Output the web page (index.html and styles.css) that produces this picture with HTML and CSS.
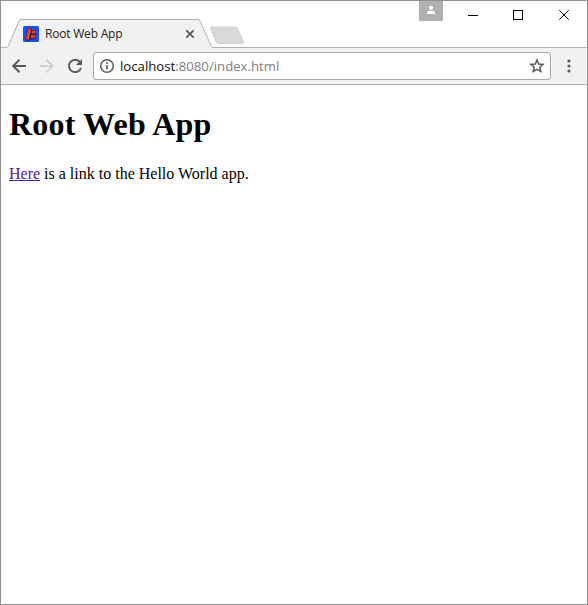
FILE: index.html
```html
<!DOCTYPE html>
<html lang="en">
<head>
<meta charset="utf-8">
<title>Root Web App</title>
<link rel="stylesheet" href="styles.css">
</head>
<body>
<div class="window">
  <header class="titlebar">
    <div class="tab">
      <svg class="tab-shape" width="210" height="29" viewBox="0 0 210 29">
        <path class="tab-fill" d="M1 29 L3 27 L14 2 Q14.800 .5 16 .5 H192.500 Q194.300 .5 195 2 L206.500 27.500 L208 29Z"/>
        <path class="tab-line" d="M0 28.500 H1 Q2.500 28.500 3 27.500 L14 2 Q14.800 .5 16 .5 H192.500 Q194.300 .5 195 2 L206.500 27.500 Q207 28.500 208.500 28.500 H210"/>
      </svg>
      <svg class="favicon" width="16" height="16" viewBox="0 0 16 16">
        <rect width="16" height="16" rx="1.500" fill="#1c50f0"/>
        <path d="M2 14 L4.500 2 H9 L8.500 4 H13.500 L12 13.500 H7 L6 15Z" fill="#1a2450"/>
        <path d="M5 2.500 H8.300 L6 13.500 H2.800Z M9.200 4.800 H13 L12.500 7.500 H8.700Z M8.200 9 H12.200 L11.700 12 H7.700Z" fill="#f23c20"/>
      </svg>
      <span class="tab-title">Root Web App</span>
      <svg class="tab-close" width="10" height="10" viewBox="0 0 10 10"><path d="M1.300 1.300 L8.700 8.700 M8.700 1.300 L1.300 8.700"/></svg>
    </div>
    <svg class="new-tab" width="36" height="19" viewBox="0 0 36 19">
      <path d="M2.500 1 H26.500 Q28 1 28.500 2.200 L34.500 16 Q35 17.500 33.500 17.500 H9.500 Q8 17.500 7.300 16.200 L1.500 2.500 Q1 1 2.500 1Z"/>
    </svg>
    <div class="controls">
      <div class="profile">
        <svg width="24" height="20" viewBox="0 0 24 20" fill="#fff"><circle cx="12" cy="6.800" r="2.100"/><path d="M8 13 V11.500 Q8 9.700 12 9.700 T16 11.500 V13Z"/></svg>
      </div>
      <svg class="caption" width="138" height="28" viewBox="0 0 138 28" shape-rendering="crispEdges">
        <path d="M19 14.500 H29"/>
        <rect x="64.500" y="9.500" width="9" height="9"/>
        <path shape-rendering="auto" d="M110.300 9.300 L119.700 18.700 M119.700 9.300 L110.300 18.700"/>
      </svg>
    </div>
  </header>
  <nav class="toolbar">
    <svg class="nav-icons" width="92" height="36" viewBox="0 0 92 36">
      <path class="icon" d="M25 18 H12.500 M18.500 11.700 L12.200 18 L18.500 24.300"/>
      <path class="icon disabled" d="M39 18 H52 M45.500 11.700 L51.800 18 L45.500 24.300"/>
      <path class="icon" d="M79 14 A6.200 6.200 0 1 0 80 20"/>
      <path d="M81 11 V17 H75Z" fill="#5a5a5a"/>
    </svg>
    <div class="omnibox">
      <svg width="16" height="16" viewBox="0 0 16 16"><circle class="info-ring" cx="8" cy="8" r="6.300"/><path d="M7.200 7 H8.800 V11.600 H7.200Z M7.200 4.300 H8.800 V5.900 H7.200Z" fill="#5a5a5a"/></svg>
      <span class="url">localhost<span class="url-rest">:8080/index.html</span></span>
      <svg class="star" width="16" height="16" viewBox="0 0 16 16"><path d="M8 2 L9.700 6 L14.100 6.400 L10.800 9.300 L11.800 13.500 L8 11.300 L4.200 13.500 L5.200 9.300 L1.900 6.400 L6.300 6Z"/></svg>
    </div>
    <svg class="menu" width="4" height="14" viewBox="0 0 4 14" fill="#5a5a5a"><circle cx="2" cy="2" r="1.600"/><circle cx="2" cy="7" r="1.600"/><circle cx="2" cy="12" r="1.600"/></svg>
  </nav>
  <main class="page">
    <h1>Root Web App</h1>
    <p><a href="#">Here</a> is a link to the Hello World app.</p>
  </main>
</div>
</body>
</html>
```
FILE: styles.css
```css
* { box-sizing: border-box; }
body { margin: 0; background: #fff; }
svg { display: block; flex: none; }
.window {
  display: flex;
  flex-direction: column;
  width: 588px;
  height: 605px;
  border: 1px solid #919191;
}
.titlebar {
  display: flex;
  align-items: flex-end;
  height: 47px;
  background: linear-gradient(#b1b1b1, #b1b1b1) bottom / 100% 1px no-repeat #fff;
}
.tab {
  position: relative;
  display: flex;
  align-items: center;
  width: 210px;
  height: 29px;
  margin-left: 4px;
  padding: 0 20px 0 18px;
}
.tab-shape { position: absolute; left: 0; top: 0; }
.tab-fill { fill: #f1f1f1; }
.tab-line { fill: none; stroke: #b1b1b1; }
.favicon, .tab-title, .tab-close { position: relative; }
.tab-title {
  flex: 1;
  margin-left: 6px;
  font: 12px/16px "Open Sans", sans-serif;
  letter-spacing: -.2px;
  color: #222;
  white-space: nowrap;
}
.tab-close { fill: none; stroke: #5a5a5a; stroke-width: 1.8; }
.new-tab { margin: 0 0 3px -6px; fill: #d9d9d9; stroke: #c9c9c9; stroke-width: .8; }
.controls { display: flex; align-self: flex-start; margin-left: auto; }
.profile { width: 24px; height: 20px; background: #b1b1b1; }
.caption { margin-left: 6px; fill: none; stroke: #000; }
.toolbar {
  display: flex;
  align-items: center;
  height: 37px;
  border-bottom: 1px solid #b1b1b1;
  background: #f1f1f1;
}
.icon { fill: none; stroke: #5a5a5a; stroke-width: 2; }
.disabled { stroke: #d2d2d2; }
.omnibox {
  display: flex;
  align-items: center;
  width: 458px;
  height: 28px;
  padding: 0 5px;
  border: 1px solid #a8a8a8;
  border-radius: 3px;
  background: #fff;
}
.info-ring { fill: none; stroke: #5a5a5a; stroke-width: 1.5; }
.url {
  flex: 1;
  margin-left: 5px;
  font: 13.2px/20px "Open Sans", sans-serif;
  color: #111;
}
.url-rest { color: #808080; }
.star { fill: none; stroke: #5a5a5a; stroke-width: 1.5; }
.menu { margin-left: 16px; }
.page {
  padding: 0 8px;
  font-family: "Liberation Serif", serif;
  font-size: 16px;
  color: #000;
}
h1 { margin: 21px 0 22px; font-size: 32px; line-height: 37px; letter-spacing: .18px; }
p { margin: 0; line-height: 18px; }
a { color: #551a8b; }
```
